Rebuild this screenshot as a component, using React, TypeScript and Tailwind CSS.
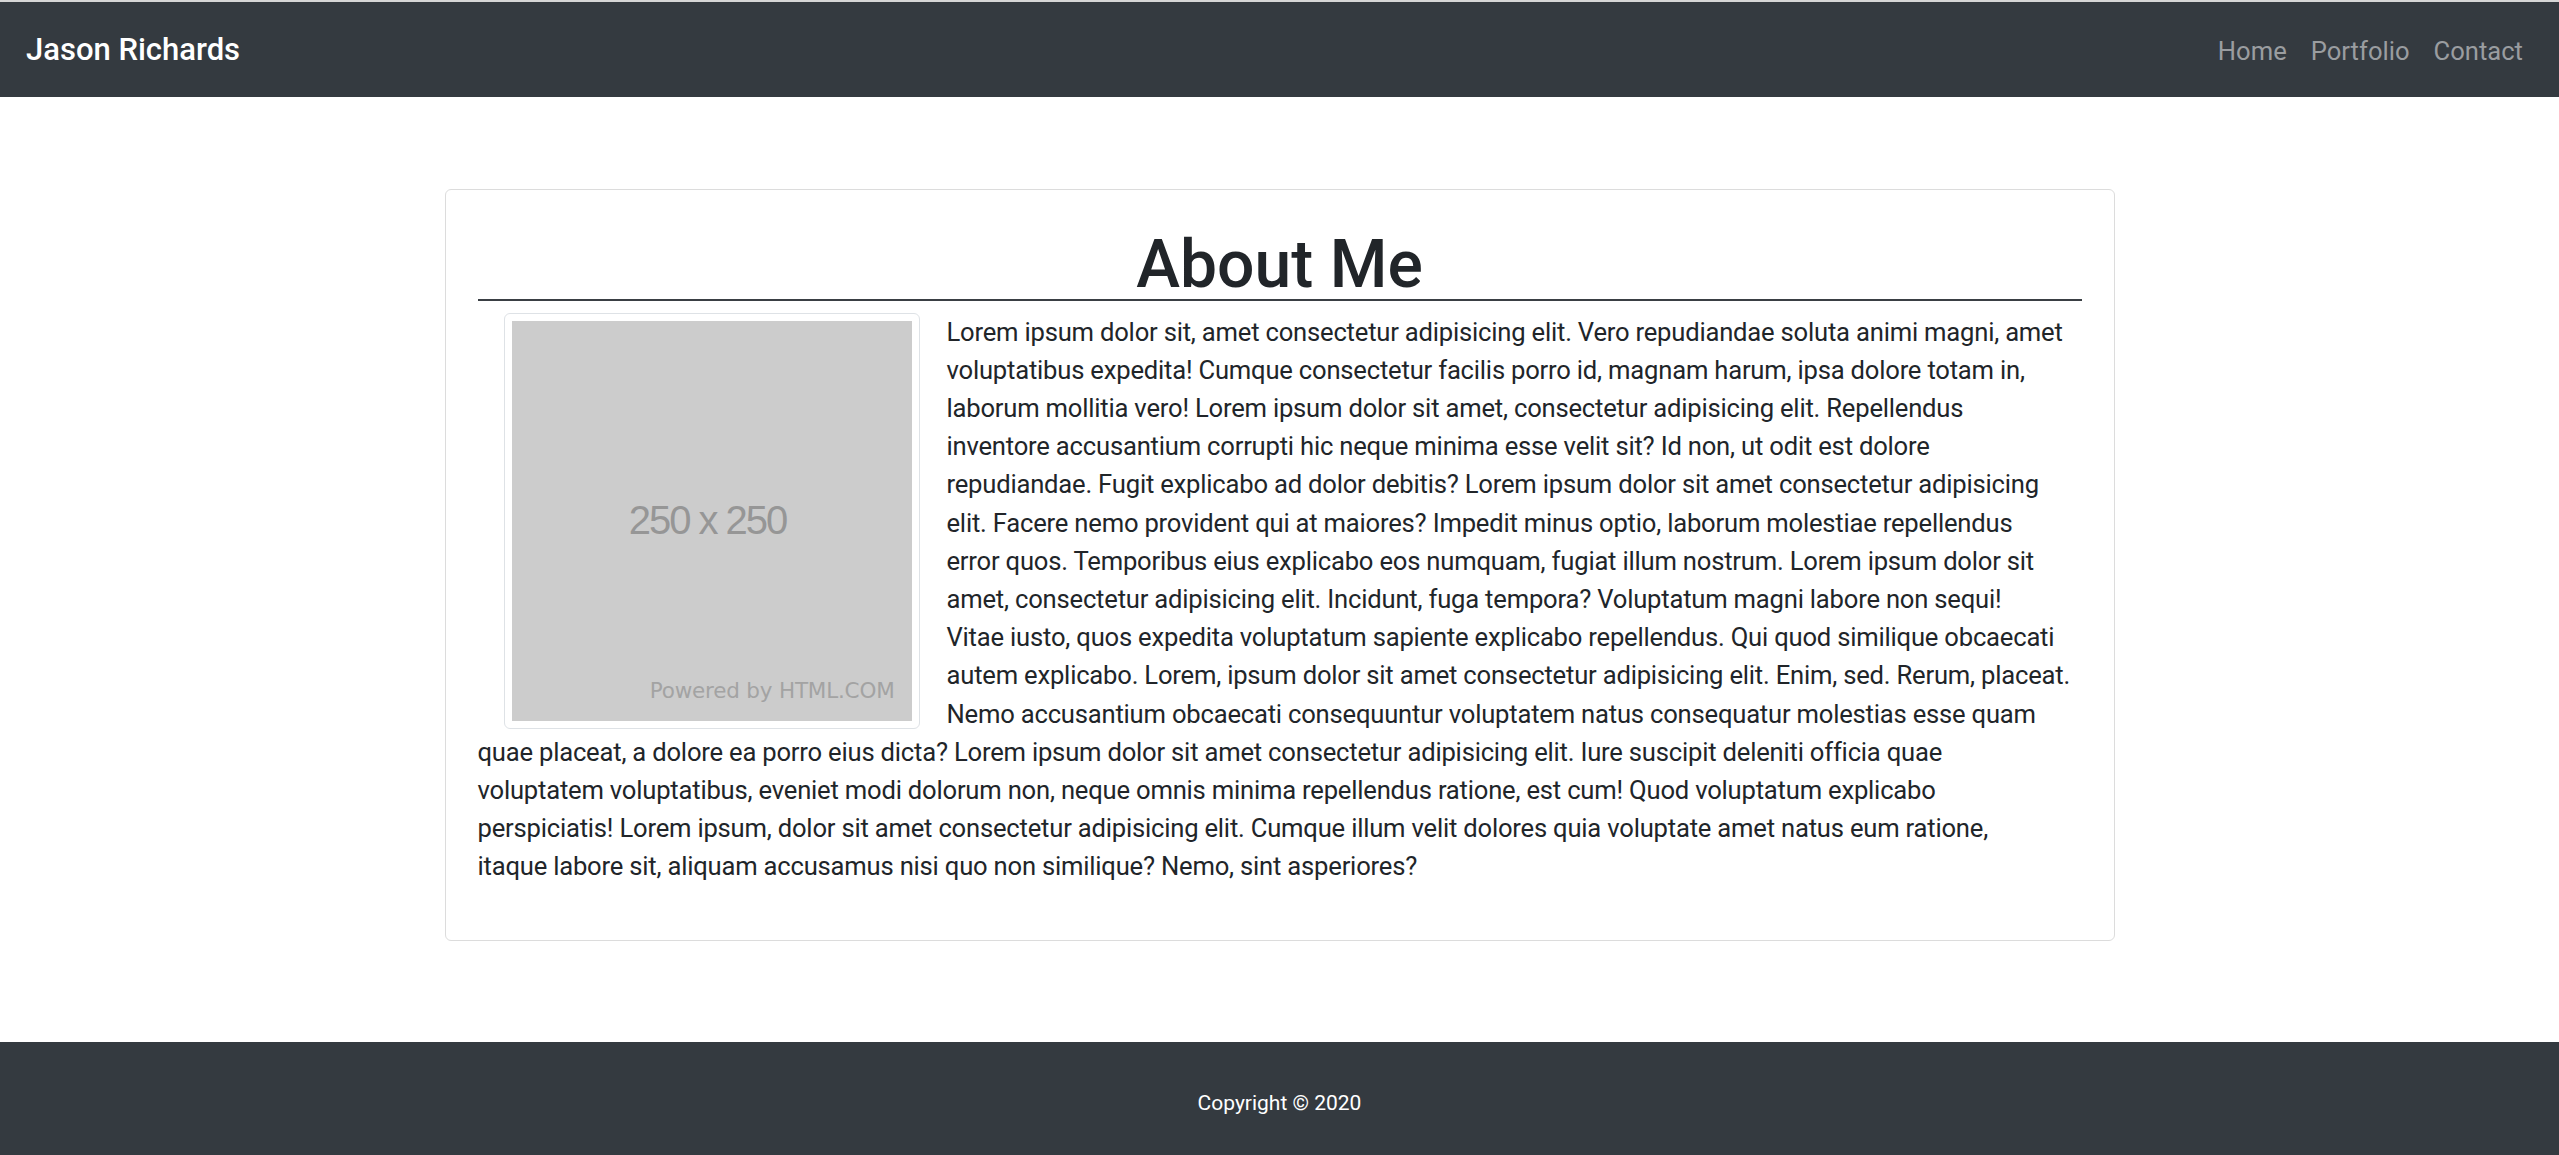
import React from "react";

const lines = [
  "Lorem ipsum dolor sit, amet consectetur adipisicing elit. Vero repudiandae soluta animi magni, amet",
  "voluptatibus expedita! Cumque consectetur facilis porro id, magnam harum, ipsa dolore totam in,",
  "laborum mollitia vero! Lorem ipsum dolor sit amet, consectetur adipisicing elit. Repellendus",
  "inventore accusantium corrupti hic neque minima esse velit sit? Id non, ut odit est dolore",
  "repudiandae. Fugit explicabo ad dolor debitis? Lorem ipsum dolor sit amet consectetur adipisicing",
  "elit. Facere nemo provident qui at maiores? Impedit minus optio, laborum molestiae repellendus",
  "error quos. Temporibus eius explicabo eos numquam, fugiat illum nostrum. Lorem ipsum dolor sit",
  "amet, consectetur adipisicing elit. Incidunt, fuga tempora? Voluptatum magni labore non sequi!",
  "Vitae iusto, quos expedita voluptatum sapiente explicabo repellendus. Qui quod similique obcaecati",
  "autem explicabo. Lorem, ipsum dolor sit amet consectetur adipisicing elit. Enim, sed. Rerum, placeat.",
  "Nemo accusantium obcaecati consequuntur voluptatem natus consequatur molestias esse quam",
  "quae placeat, a dolore ea porro eius dicta? Lorem ipsum dolor sit amet consectetur adipisicing elit. Iure suscipit deleniti officia quae",
  "voluptatem voluptatibus, eveniet modi dolorum non, neque omnis minima repellendus ratione, est cum! Quod voluptatum explicabo",
  "perspiciatis! Lorem ipsum, dolor sit amet consectetur adipisicing elit. Cumque illum velit dolores quia voluptate amet natus eum ratione,",
  "itaque labore sit, aliquam accusamus nisi quo non similique? Nemo, sint asperiores?",
];

function Placeholder() {
  return (
    <div className="float-left ml-[26px] mr-[27px] rounded-[6px] border border-[#dee2e6] bg-white p-[7px]">
      <div className="relative flex h-[400px] w-[400px] items-center justify-center bg-[#cccccc]">
        <span className="-ml-[8px] font-['Liberation_Sans',sans-serif] text-[40px] tracking-[-2px] text-[#969696]">
          250 x 250
        </span>
        <span className="absolute bottom-[10px] right-[17px] font-['DejaVu_Sans',sans-serif] text-[21.5px] text-[#a3a3a3]">
          Powered by HTML.COM
        </span>
      </div>
    </div>
  );
}

export default function App() {
  return (
    <div className="min-h-screen bg-white font-['Roboto',sans-serif] text-[#212529]">
      <div className="h-[2px] bg-[#d6d6d6]" />
      <nav className="flex h-[95px] items-center justify-between bg-[#343a40] pl-[26px] pr-[24px]">
        <a className="text-[31px] font-medium leading-none text-white">Jason Richards</a>
        <ul className="mt-[4px] flex text-[25.6px] text-[#9a9da0]">
          <li className="px-[12px]">Home</li>
          <li className="px-[12px]">Portfolio</li>
          <li className="px-[12px]">Contact</li>
        </ul>
      </nav>

      <main className="flex justify-center pb-[101px] pt-[92px]">
        <div className="w-[1670px] rounded-[6px] border border-[#dcdcdc] px-[32px] pb-[54px] pt-[32px]">
          <h1 className="-mb-[5px] mt-[5px] text-center text-[66px] font-medium leading-[1.16]">About Me</h1>
          <div className="h-[2px] bg-[#3a3f44]" />
          <div className="mt-[12px] text-[25.6px] leading-[38.2px] tracking-[-0.2px]">
            <Placeholder />
            <p>
              {lines.map((l, i) => (
                <React.Fragment key={i}>
                  {l}
                  {i < lines.length - 1 && <br />}
                </React.Fragment>
              ))}
            </p>
            <div className="clear-both" />
          </div>
        </div>
      </main>

      <footer className="bg-[#343a40] pb-[49px] pt-[47px] text-center text-[21px] leading-[29px] text-white">
        Copyright © 2020
      </footer>
    </div>
  );
}
